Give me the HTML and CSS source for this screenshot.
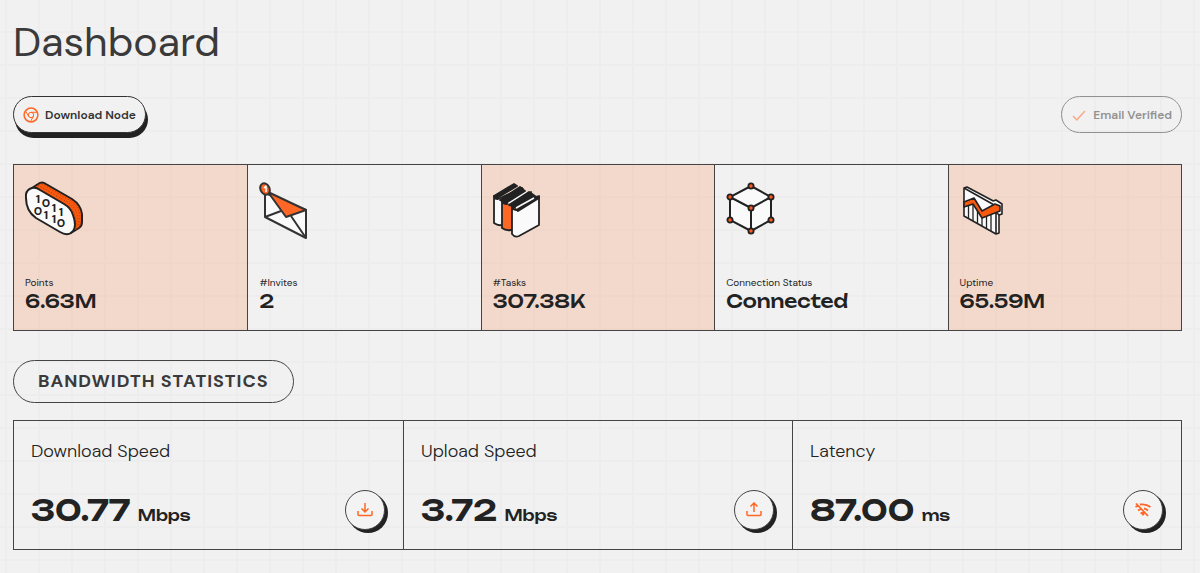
FILE: index.html
```
<!DOCTYPE html>
<html lang="en">
<head>
    <meta charset="UTF-8">
    <meta name="viewport" content="width=device-width, initial-scale=1.0">
    <title>Dashboard</title>
    <link rel="stylesheet" href="styles.css">
</head>
<body>
    <main class="dashboard">
        <h1 class="page-title">Dashboard</h1>

        <div class="actions">
            <button type="button" class="btn btn-raised">
                <svg class="btn-icon" viewBox="0 0 16 16" fill="none" stroke="currentColor">
                    <circle cx="8" cy="8" r="6.9" stroke-width="1.5"/>
                    <circle cx="8" cy="8" r="2.7"/>
                    <path d="M8 5.3h6M5.6 9.3L2.7 4.2M10.4 9.3L7.4 14.7"/>
                </svg>
                Download Node
            </button>
            <button type="button" class="btn" disabled>
                <svg class="btn-icon" viewBox="0 0 16 16" fill="none" stroke="currentColor" stroke-width="1.5">
                    <path d="M2 9l3.8 3.8L14 4"/>
                </svg>
                Email Verified
            </button>
        </div>

        <section class="cards">
            <div class="card">
                <svg class="card-icon" viewBox="0 0 60 60" stroke="#222" stroke-width="2" stroke-linejoin="round">
                    <path fill="#f9590f" d="M7 8l6-4q4-3 8 0l26 15q9 6 10 15v8q0 4-3 6l-8 5z"/>
                    <path fill="none" stroke="#a33a0c" stroke-width="1" stroke-dasharray="1 2" d="M13 5l31 18q7 5 9 14v13M17 4l29 17q8 6 9 14v13M11 7l31 18q7 5 9 14v11"/>
                    <path fill="#fafafa" d="M1 18q-1-8 6-10 4-1 8 2l24 14q7 4 9 11 4 11 0 16-5 6-13 1L11 38Q1 31 1 18z"/>
                    <!-- one text per column of digits -->
                    <g class="coin-digits" fill="#222" stroke="none">
                        <text x="13 13" y="23 35">10</text>
                        <text x="21 21" y="27 39">01</text>
                        <text x="29 29" y="32 43">11</text>
                        <text x="36 36" y="36 47">10</text>
                    </g>
                </svg>
                <p class="card-label">Points</p>
                <p class="card-value">6.63M</p>
            </div>
            <div class="card">
                <svg class="card-icon" viewBox="0 0 60 60" stroke="#333" stroke-width="2" stroke-linejoin="round">
                    <path fill="#fafafa" d="M6 13l41 17v28L6 37z"/>
                    <path d="M6 37l16-6M47 58L32 36"/>
                    <path fill="#ff6726" d="M9 12l38 18-20 7z"/>
                    <ellipse cx="6" cy="9" rx="4.500" ry="6" fill="#ff6726" transform="rotate(-25 6 9)"/>
                    <path d="M5 8l2-2v6" fill="none" stroke="#fff" stroke-width="1.5"/>
                </svg>
                <p class="card-label">#Invites</p>
                <p class="card-value">2</p>
            </div>
            <div class="card">
                <svg class="card-icon" viewBox="0 0 60 60" stroke="#222" stroke-width="1.8" stroke-linejoin="round">
                    <path fill="#fafafa" d="M1 16q0 3 4 3l24-11v30L9 45q-4 1-8-2z"/>
                    <path fill="#222" d="M1 16L21 4l3 2-20 12zM7 20L27 7l3 2-19 13z"/>
                    <path fill="#ff6726" d="M9 21q1 3 5 3l24-12v30L18 50q-5 1-9-2z"/>
                    <path fill="#fafafa" stroke="none" d="M13 22l20-11 2 2-19 11z"/>
                    <path fill="#222" d="M9 21L29 9l3 2-19 12zM16 25L36 12l3 2-18 12z"/>
                    <path fill="#fafafa" d="M19 27q1 3 5 3l22-13v28L26 56q-4 2-7-2z"/>
                    <path fill="#222" d="M19 27L39 14l3 2-19 12zM24 30l18-13 4-1v2L25 31z"/>
                    <path stroke="#fafafa" stroke-width="1.6" d="M23 28l18-10"/>
                </svg>
                <p class="card-label">#Tasks</p>
                <p class="card-value">307.38K</p>
            </div>
            <div class="card">
                <svg class="card-icon" viewBox="0 0 60 60" stroke="#222" stroke-width="2">
                    <path fill="#fafafa" d="M25 6l20 11v23L25 51 4 40V17z"/>
                    <path fill="none" d="M4 17l21 11 20-11M25 28v23"/>
                    <g fill="#ff5a1c" stroke-width="1.8">
                        <circle cx="25" cy="6" r="2.6"/>
                        <circle cx="4" cy="17" r="2.6"/>
                        <circle cx="45" cy="17" r="2.6"/>
                        <circle cx="25" cy="28" r="2.6"/>
                        <circle cx="4" cy="40" r="2.6"/>
                        <circle cx="45" cy="40" r="2.6"/>
                        <circle cx="25" cy="51" r="2.6"/>
                    </g>
                </svg>
                <p class="card-label">Connection Status</p>
                <p class="card-value">Connected</p>
            </div>
            <div class="card">
                <svg class="card-icon" viewBox="0 0 60 60" stroke="#222" stroke-width="1.6" stroke-linejoin="round">
                    <path fill="#fafafa" d="M4 8l3-1 32 17v29l-3 1L4 36z"/>
                    <path fill="none" d="M4 8l32 18v28"/>
                    <path stroke-width="1.3" d="M8.5 25v13M13 23v18M17.5 28v15M22 37v9M26.5 36v12M31 33v18"/>
                    <path fill="#fafafa" d="M33 21l3-1 6 4v10l-3 1-3-3"/>
                    <path fill="#f9590f" d="M4 22l10-4 8 13 13-7 5 2v5l-18 7-9-14-9 3z"/>
                </svg>
                <p class="card-label">Uptime</p>
                <p class="card-value">65.59M</p>
            </div>
        </section>

        <h2 class="section-title">BANDWIDTH STATISTICS</h2>

        <section class="stats">
            <div class="stat">
                <h3 class="stat-label">Download Speed</h3>
                <div class="stat-row">
                    <p class="stat-value">30.77 <span class="unit">Mbps</span></p>
                    <button type="button" class="round-btn" aria-label="Download speed">
                        <svg viewBox="0 0 16 16" fill="none" stroke="currentColor" stroke-width="1.5">
                            <path d="M8 1v9M4.5 6.5L8 10l3.5-3.5M1 9v3.5q0 1 1 1h12q1 0 1-1V9"/>
                        </svg>
                    </button>
                </div>
            </div>
            <div class="stat">
                <h3 class="stat-label">Upload Speed</h3>
                <div class="stat-row">
                    <p class="stat-value">3.72 <span class="unit">Mbps</span></p>
                    <button type="button" class="round-btn" aria-label="Upload speed">
                        <svg viewBox="0 0 16 16" fill="none" stroke="currentColor" stroke-width="1.5">
                            <path d="M8 10V1M4.5 4.5L8 1l3.5 3.5M1 9v3.5q0 1 1 1h12q1 0 1-1V9"/>
                        </svg>
                    </button>
                </div>
            </div>
            <div class="stat">
                <h3 class="stat-label">Latency</h3>
                <div class="stat-row">
                    <p class="stat-value">87.00 <span class="unit">ms</span></p>
                    <button type="button" class="round-btn" aria-label="Latency">
                        <svg viewBox="0 0 16 16" fill="none" stroke="currentColor" stroke-width="1.8">
                            <path d="M1 1.5l12 12.5M5 2.5q6-1 10.5 2.500M9 6.500q2 .3 4 2M.5 5l2.5-1.5M3 8.5l3-1.7M5.5 11.5l3-1.5"/>
                            <path fill="currentColor" stroke="none" d="M6 11.5q2-2 4 0L8 14z"/>
                        </svg>
                    </button>
                </div>
            </div>
        </section>
    </main>
</body>
</html>
```
FILE: styles.css
```
* {
    box-sizing: border-box;
}
body {
    margin: 0;
    font-family: "DM Sans", Inter, Arial, sans-serif;
    color: #222;
    background-color: #f1f1f1;
    background-image:
        linear-gradient(to right, #ededed 2px, transparent 2px),
        linear-gradient(to bottom, #ededed 2px, transparent 2px);
    background-size: 33px 33px;
    background-position: 5px 31px;
}
h1, h2, h3, p {
    margin: 0;
}
.dashboard {
    padding: 16px 18px 23px 13px;
}
.page-title {
    font-size: 41px;
    line-height: 52px;
    font-weight: 400;
    color: #3a3a3a;
}
.actions {
    display: flex;
    justify-content: space-between;
    margin: 28px 0 31px;
}
.btn {
    display: flex;
    align-items: center;
    gap: 6px;
    height: 37px;
    padding: 0 9px;
    border: 1px solid #333;
    border-radius: 20px;
    background: #f1f1f1;
    font-family: inherit;
    font-size: 12px;
    font-weight: 600;
    color: #333;
}
.btn:disabled {
    background: transparent;
    opacity: 0.5;
}
.btn-raised {
    box-shadow: 2px 5px 0 #222;
}
.btn-icon {
    width: 16px;
    height: 16px;
    color: #ff6726;
}

.cards {
    display: grid;
    grid-template-columns: repeat(5, 1fr);
    border: 1px solid #444;
}
.card {
    padding: 15px 11px 17px;
}
.card + .card, .stat + .stat {
    border-left: 1px solid #444;
}
.card:nth-child(odd) {
    background: rgba(255, 103, 38, 0.18);
}
.card-icon {
    display: block;
    width: 60px;
    height: 60px;
    margin-bottom: 36px;
}
.coin-digits {
    font-size: 12px;
    font-weight: 700;
    text-anchor: middle;
}
.card-label {
    font-size: 10px;
    line-height: 14px;
}
.card-value, .stat-value {
    font-family: Unbounded, "DejaVu Sans", sans-serif;
    font-weight: 600;
}
.card-value {
    font-size: 18px;
    line-height: 23px;
    font-weight: 500;
}

.section-title {
    width: fit-content;
    margin: 29px 0 17px;
    padding: 0 24px;
    border: 1px solid #444;
    border-radius: 22px;
    font-size: 18px;
    line-height: 41px;
    font-weight: 700;
    letter-spacing: 1px;
    color: #3a3a3a;
}

.stats {
    display: grid;
    grid-template-columns: repeat(3, 1fr);
    border: 1px solid #444;
}
.stat {
    padding: 18px 18px 19px 17px;
}
.stat-label {
    font-size: 18px;
    line-height: 24px;
    font-weight: 300;
}
.stat-row {
    display: flex;
    justify-content: space-between;
    align-items: center;
    margin-top: 27px;
}
.stat-value {
    font-size: 29px;
    line-height: 40px;
}
.unit {
    font-size: 15px;
    line-height: 1;
    font-weight: 500;
}
.round-btn {
    display: grid;
    place-items: center;
    width: 40px;
    height: 40px;
    padding: 0;
    border: 1px solid #444;
    border-radius: 50%;
    background: #f3f3f3;
    box-shadow: 3px 3px 0 #222;
    color: #ff6726;
}
.round-btn svg {
    width: 16px;
    height: 16px;
}
```
